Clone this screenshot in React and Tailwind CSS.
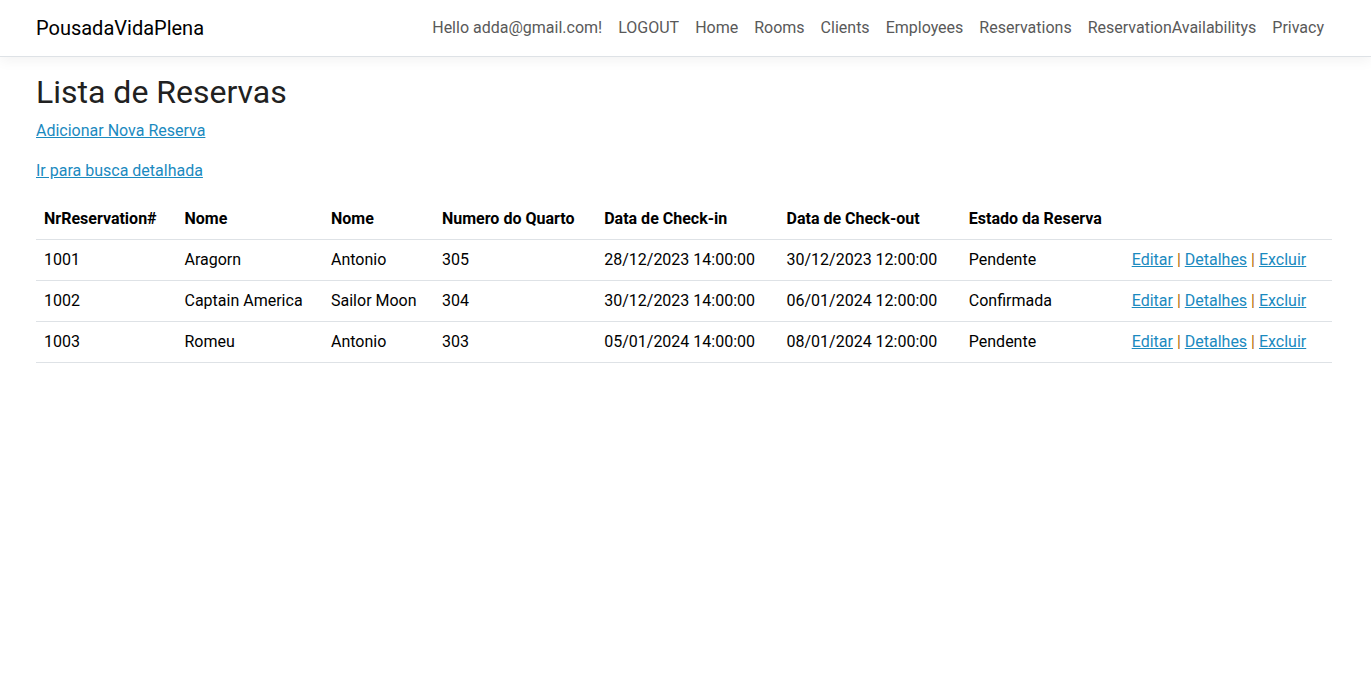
const navItems = [
  "Hello adda@gmail.com!",
  "LOGOUT",
  "Home",
  "Rooms",
  "Clients",
  "Employees",
  "Reservations",
  "ReservationAvailabilitys",
  "Privacy",
];

const columns = [
  "NrReservation#",
  "Nome",
  "Nome",
  "Numero do Quarto",
  "Data de Check-in",
  "Data de Check-out",
  "Estado da Reserva",
];

const reservations = [
  ["1001", "Aragorn", "Antonio", "305", "28/12/2023 14:00:00", "30/12/2023 12:00:00", "Pendente"],
  ["1002", "Captain America", "Sailor Moon", "304", "30/12/2023 14:00:00", "06/01/2024 12:00:00", "Confirmada"],
  ["1003", "Romeu", "Antonio", "303", "05/01/2024 14:00:00", "08/01/2024 12:00:00", "Pendente"],
];

function TextLink({ children }) {
  return (
    <a href="#" className="text-[#1b8abf] underline">
      {children}
    </a>
  );
}

export default function App() {
  return (
    <div className="font-['Roboto',sans-serif] text-base text-[#212121]">
      <header className="mb-4 border-b border-[#dee2e6] bg-white py-2 shadow-[0_4px_12px_rgba(0,0,0,0.05)]">
        <nav className="flex items-center justify-between pr-[39px] pl-9">
          <a href="#" className="text-xl text-black">
            PousadaVidaPlena
          </a>
          <ul className="flex">
            {navItems.map((item) => (
              <li key={item}>
                <a href="#" className="block p-2 text-[#595959]">
                  {item}
                </a>
              </li>
            ))}
          </ul>
        </nav>
      </header>

      <main className="pr-[39px] pl-9">
        <h1 className="mb-2 text-[32px] leading-[38px]">Lista de Reservas</h1>
        <p className="mb-4">
          <TextLink>Adicionar Nova Reserva</TextLink>
        </p>
        <p className="mb-4">
          <TextLink>Ir para busca detalhada</TextLink>
        </p>
        <table className="w-full text-left text-black">
          <thead>
            <tr className="border-b border-[#dee2e6]">
              {columns.map((column, i) => (
                <th key={i} className="p-2 font-bold">
                  {column}
                </th>
              ))}
              <td className="p-2"></td>
            </tr>
          </thead>
          <tbody>
            {reservations.map((row) => (
              <tr key={row[0]} className="border-b border-[#dee2e6]">
                {row.map((cell, i) => (
                  <td key={i} className="p-2">
                    {cell}
                  </td>
                ))}
                <td className="p-2 text-[#b36b00]">
                  <TextLink>Editar</TextLink> | <TextLink>Detalhes</TextLink> | <TextLink>Excluir</TextLink>
                </td>
              </tr>
            ))}
          </tbody>
        </table>
      </main>
    </div>
  );
}
